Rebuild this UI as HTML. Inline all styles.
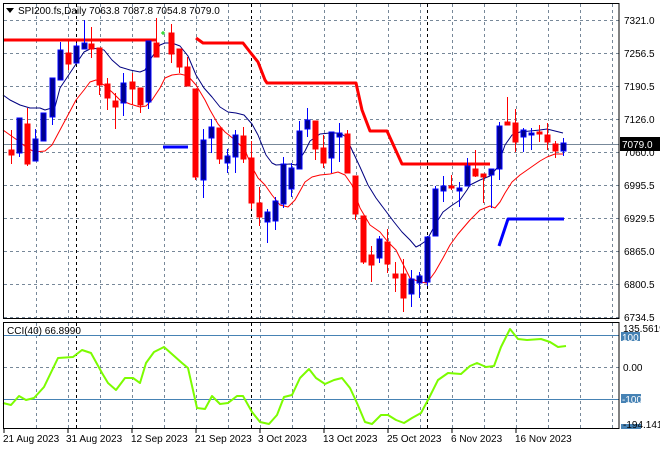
<!DOCTYPE html>
<html><head><meta charset="utf-8"><style>
html,body{margin:0;padding:0;background:#fff;width:660px;height:450px;overflow:hidden}
svg{display:block}
text{font-family:"Liberation Sans",sans-serif;font-size:10px;fill:#000}
</style></head><body>
<svg id="s" width="660" height="450" viewBox="0 0 660 450" xmlns="http://www.w3.org/2000/svg">
<rect width="660" height="450" fill="#fff"/>
<g id="grid" stroke="#778899" stroke-width="1" stroke-dasharray="3,3" fill="none"></g>
<line x1="4" y1="144.5" x2="619" y2="144.5" stroke="#778899" stroke-width="1"/>
<g id="vb" stroke="#000" stroke-width="1" stroke-dasharray="3,3"></g>
<g id="ind" fill="none"></g>
<g id="cdl"></g>
<rect x="3.5" y="3.5" width="615.5" height="315" fill="none" stroke="#000"/>
<rect x="3.5" y="322.5" width="615.5" height="106" fill="none" stroke="#000"/>
<path d="M6,8 L14,8 L10,13 Z" fill="#000"/>
<text x="18" y="14" font-size="11">SPI200.fs,Daily  7063.8 7087.8 7054.8 7079.0</text>
<g font-size="10">
<text x="624" y="24">7321.0</text>
<text x="624" y="57">7256.5</text>
<text x="624" y="90">7190.5</text>
<text x="624" y="123">7126.0</text>
<text x="624" y="156">7060.0</text>
<text x="624" y="189">6995.5</text>
<text x="624" y="222">6929.5</text>
<text x="624" y="255">6865.0</text>
<text x="624" y="288">6800.5</text>
<text x="624" y="321">6734.5</text>
</g>
<rect x="620" y="137" width="40" height="14" fill="#000"/>
<text x="622" y="148" fill="#fff" style="fill:#fff">7079.0</text>
<text x="7" y="334">CCI(40) 66.8990</text>
<text x="623" y="332">135.5619</text>
<rect x="621" y="332" width="19" height="9" fill="#4682B4"/>
<text x="622" y="341" style="fill:#fff">100</text>
<text x="623" y="371">0.00</text>
<rect x="621" y="394" width="20" height="9" fill="#4682B4"/>
<text x="622" y="403" style="fill:#fff">-100</text>
<rect x="621" y="424" width="20" height="5" fill="#4682B4"/>
<text x="623" y="428">-194.141</text>
<g font-size="10">
<text x="3" y="442">21 Aug 2023</text>
<text x="66" y="442">31 Aug 2023</text>
<text x="131" y="442">12 Sep 2023</text>
<text x="195" y="442">21 Sep 2023</text>
<text x="258" y="442">3 Oct 2023</text>
<text x="323" y="442">13 Oct 2023</text>
<text x="387" y="442">25 Oct 2023</text>
<text x="451" y="442">6 Nov 2023</text>
<text x="515" y="442">16 Nov 2023</text>
</g>
<g stroke="#000"><line x1="4" y1="429" x2="4" y2="433"/><line x1="68" y1="429" x2="68" y2="433"/><line x1="132" y1="429" x2="132" y2="433"/><line x1="196" y1="429" x2="196" y2="433"/><line x1="260" y1="429" x2="260" y2="433"/><line x1="324" y1="429" x2="324" y2="433"/><line x1="388" y1="429" x2="388" y2="433"/><line x1="452" y1="429" x2="452" y2="433"/><line x1="516" y1="429" x2="516" y2="433"/></g>
</svg>
<script>
var NS="http://www.w3.org/2000/svg";
function el(p,t,a){var e=document.createElementNS(NS,t);for(var k in a)e.setAttribute(k,a[k]);p.appendChild(e);return e;}
var g=document.getElementById("grid");
[20,53,86,119,152,185,218,251,284,317].forEach(function(y){el(g,"line",{x1:4,y1:y+.5,x2:619,y2:y+.5});});
el(g,"line",{x1:4,y1:367.5,x2:619,y2:367.5});
for(var x=36;x<619;x+=32){el(g,"line",{x1:x+.5,y1:4,x2:x+.5,y2:318});el(g,"line",{x1:x+.5,y1:323,x2:x+.5,y2:428});}
var vb=document.getElementById("vb");
[76,251,427].forEach(function(x){el(vb,"line",{x1:x+.5,y1:4,x2:x+.5,y2:318});el(vb,"line",{x1:x+.5,y1:323,x2:x+.5,y2:428});});
var ind=document.getElementById("ind");
el(ind,"line",{x1:4,y1:335.5,x2:619,y2:335.5,stroke:"#4682B4"});
el(ind,"line",{x1:4,y1:399.5,x2:619,y2:399.5,stroke:"#4682B4"});
function pl(pts,c,w){el(ind,"polyline",{points:pts,stroke:c,"stroke-width":w,fill:"none","stroke-linejoin":"round"});}
pl("4,40 157,40","#f00",3);
pl("196,38 203,43 243,43 250,52 258,62 265,80 267,83 356,83 362,110 370,131 387,131 402,164 490,164","#f00",3);
pl("163,147 188,147","#0000ff",3);
pl("499,246 508,219 564,219","#0000ff",3);
pl("3,95 10,100 20,105 30,108 40,108 45,110 55,107 60,88 70,73 76,64 84,52 92,48 98,49 104,50 112,60 120,67 130,70 140,72 145,70 150,60 160,45 165,43 172,43 180,46 188,56 196,75 204,88 212,97 220,107 228,112 236,113 244,115 252,124 258,135 262,145 266,155 272,163 276,165 290,164 296,165 305,151 310,141 320,134 330,133 340,133 346,137 352,150 360,167 368,185 376,198 385,210 394,222 402,232 410,240 416,247 420,245 427,240 435,225 443,212 451,206 460,200 467,190 470,185 480,180 490,176 497,168 505,145 512,135 520,132 530,131 540,130 547,129 555,131 563,133","#000080",1);
pl("3,130 10,135 20,142 27,148 35,152 45,151 52,145 60,130 68,115 76,100 84,90 90,82 96,80 104,85 112,92 120,100 130,104 140,107 146,106 152,100 160,88 165,78 172,75 180,74 188,76 196,85 205,100 210,110 218,124 225,132 235,140 245,150 251,165 258,178 265,185 272,195 280,205 288,207 295,200 305,182 312,177 320,175 330,174 338,172 345,175 352,185 360,208 370,225 380,232 388,242 396,250 402,262 410,278 420,282 427,283 435,272 443,258 450,245 458,234 470,220 480,210 490,206 495,208 500,202 505,193 512,182 520,175 530,168 540,161 547,157 555,154 563,154","#f00",1);
pl("3,403 11,405 19,396 26,400 34,398 44,387 58,358 73,357 82,350 91,353 102,373 108,383 116,390 125,378 133,378 140,383 146,363 154,352 164,347 173,355 182,363 188,368 197,408 205,409 212,396 220,404 228,403 237,396 243,396 252,412 260,422 269,424 277,415 284,397 292,395 300,378 309,369 316,378 325,384 334,380 342,378 350,388 357,403 365,422 372,424 381,415 388,415 396,420 404,423 412,418 421,413 429,398 438,380 448,373 461,374 470,366 477,363 486,367 494,366 501,347 510,329 518,339 527,340 541,339 550,342 558,347 566,346","#7CFC00",2);
var C=[
[11,150,155,130,164,'r'],[19,118,153,118,157,'b'],[27,124,164,108,166,'r'],[35,139,161,129,161,'b'],[43,113,141,113,141,'b'],
[52,78,117,78,125,'b'],[60,50,80,42,80,'b'],[68,53,64,40,70,'r'],[76,46,63,43,63,'b'],[84,43,49,20,49,'b'],
[91,44,49,27,58,'r'],[99,48,85,48,95,'r'],[107,84,98,78,110,'r'],[115,101,107,93,129,'r'],[123,83,103,73,116,'b'],
[132,82,89,73,105,'r'],[140,88,105,88,113,'r'],[148,41,102,41,109,'b'],[156,43,57,18,57,'r'],[171,33,54,24,63,'r'],
[179,49,67,49,73,'r'],[187,67,86,57,86,'r'],[195,89,177,89,180,'r'],[203,140,180,129,198,'b'],[211,127,138,119,153,'b'],
[219,128,159,128,164,'r'],[227,156,163,149,173,'b'],[235,135,157,130,173,'b'],[243,136,159,127,163,'r'],[251,158,203,141,209,'r'],
[259,203,217,187,226,'r'],[267,212,222,209,243,'b'],[275,201,221,197,230,'b'],[283,164,204,157,208,'b'],[291,168,189,163,197,'b'],
[299,131,169,121,169,'b'],[307,120,129,108,137,'b'],[315,121,149,121,160,'r'],[323,148,163,135,168,'r'],[331,132,158,132,173,'b'],
[339,133,137,123,162,'b'],[347,134,173,130,173,'r'],[355,176,214,176,220,'r'],[363,216,262,216,264,'r'],[371,255,265,246,282,'r'],
[379,239,258,236,263,'b'],[387,242,264,229,273,'r'],[395,274,278,262,292,'r'],[403,274,298,259,312,'r'],[411,279,294,270,307,'b'],
[419,276,283,272,298,'b'],[427,237,282,236,286,'b'],[435,189,236,186,236,'b'],[443,186,191,176,202,'b'],[451,186,188,175,190,'r'],
[459,188,191,182,207,'b'],[467,166,186,158,186,'b'],[475,169,176,150,177,'r'],[483,174,177,174,203,'r'],[491,169,175,169,208,'b'],
[499,126,169,122,180,'b'],[507,122,125,97,125,'r'],[515,123,142,109,152,'r'],[523,130,137,128,152,'b'],[531,133,135,128,150,'b'],
[539,132,134,125,142,'r'],[547,135,142,123,150,'r'],[555,144,151,141,158,'r'],[563,143,151,138,156,'b']];
var cg=document.getElementById("cdl");
C.forEach(function(c){var x=c[0],b=c[5]=='b';var col=b?"#0000ff":"#ff0000";
el(cg,"line",{x1:x+.5,y1:c[3],x2:x+.5,y2:c[4],stroke:col,"stroke-width":1});
var h=Math.max(c[2]-c[1],2);
el(cg,"rect",{x:x-2,y:c[1],width:5,height:h,fill:b?"#00008b":"#ff0000",stroke:col,"stroke-width":1});});
el(cg,"path",{d:"M161,33 h4 M163,31 v4",stroke:"#0c0","stroke-width":1});
</script>
</body></html>
